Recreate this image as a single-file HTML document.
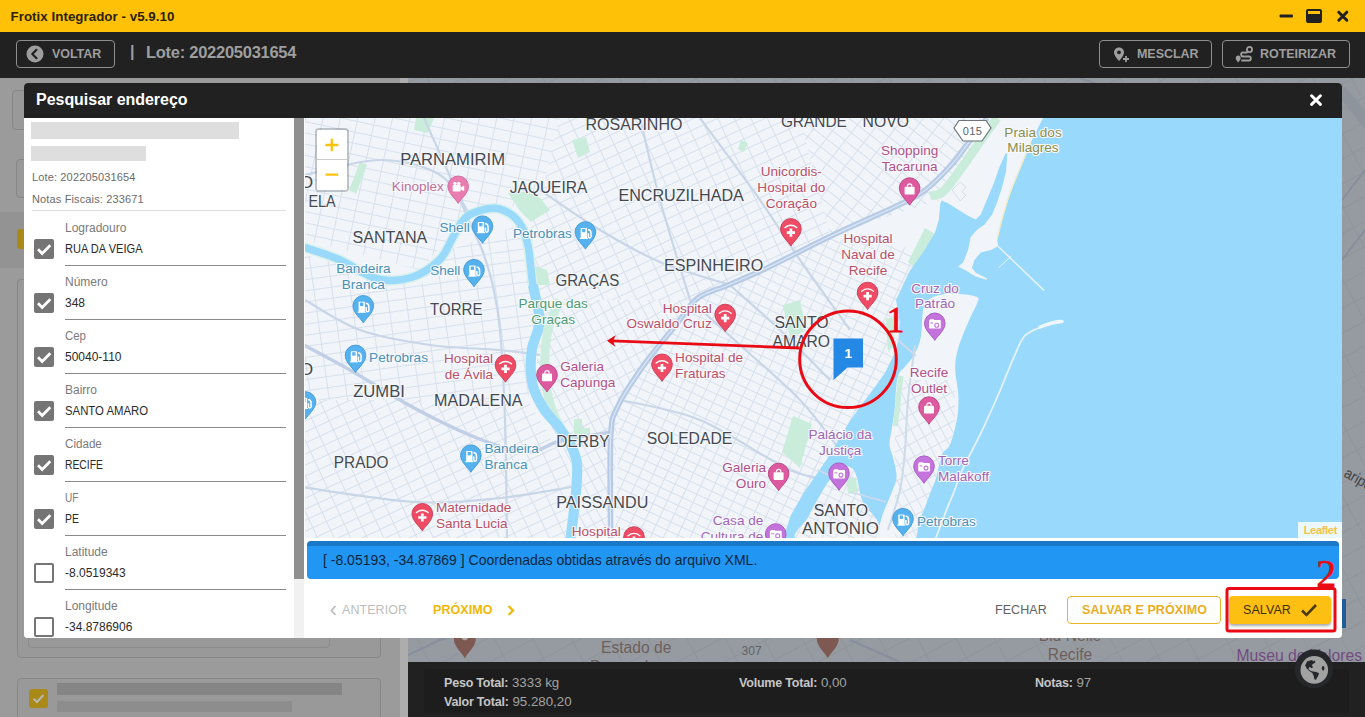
<!DOCTYPE html>
<html lang="pt-br">
<head>
<meta charset="utf-8">
<title>Frotix Integrador</title>
<style>
*{box-sizing:border-box;margin:0;padding:0}
html,body{width:1365px;height:717px;overflow:hidden;background:#9b9b9b;font-family:"Liberation Sans",sans-serif;}
.abs{position:absolute}
#titlebar{left:0;top:0;width:1365px;height:32px;background:#ffc107}
#titlebar .t{left:10.5px;top:8.5px;font-size:13.3px;font-weight:bold;color:#2b2104;letter-spacing:.05px;white-space:nowrap}
#toolbar{left:0;top:32px;width:1365px;height:46px;background:#212121}
.tbtn{border:1px solid #8e8e8e;border-radius:4px;height:28px;top:40px;color:#9e9e9e;font-weight:bold;font-size:12.5px;letter-spacing:-.05px;white-space:nowrap}
.tbtn span{position:absolute;top:6px}
/* background app (dimmed) */
#bgleft{left:0;top:78px;width:400px;height:639px;background:#9b9b9b}
#bgscroll{left:400px;top:78px;width:8px;height:639px;background:#adadad}
#bgmap{left:408px;top:78px;width:957px;height:585px;background:#969ba1}
#bottombar{left:408px;top:662px;width:957px;height:55px;background:#212121}
#bottomcard{left:424px;top:669px;width:925px;height:44px;background:#1d1d1d;border-radius:4px}
.bt{font-size:13.3px;color:#a3a3a3;white-space:nowrap;letter-spacing:0}
.bt b{color:#c6c6c6;font-size:12.5px;letter-spacing:-.2px}
.bgcard{border:1px solid #868686;border-radius:4px;background:#999999}
/* modal */
#modal{left:24px;top:83px;width:1318px;height:555px;background:#fff;border-radius:4px;overflow:hidden}
#mhead{left:0;top:0;width:1318px;height:35px;background:#212121}
#mhead .t{left:12px;top:8px;font-size:16px;font-weight:bold;color:#fff;letter-spacing:-0.03px;white-space:nowrap}
#form{left:0;top:35px;width:270px;height:520px;background:#fff}
#sbtrack{left:270px;top:35px;width:10px;height:520px;background:#f1f1f1}
#sbthumb{left:270px;top:35px;width:10px;height:461px;background:#8f8f8f}
.blur{background:#dedede}
.meta{font-size:11px;color:#6b6b6b;white-space:nowrap;left:8px;letter-spacing:.14px}
.row .lbl,.row .val{transform-origin:0 0}
.row .lbl{left:41px;font-size:12px;color:#7a7a7a;white-space:nowrap}
.row .val{left:41px;font-size:12px;color:#2a2a2a;white-space:nowrap}
.row .ul{left:41px;width:221px;height:1px;background:#8a8a8a}
.cb{left:10px;width:20px;height:20px;border-radius:2px}
.cb.on{background:#757575}
.cb.off{border:2px solid #757575;background:#fff}
#map{left:281px;top:35px;width:1037px;height:420px;background:#eff4fa;overflow:hidden}
#bluebar{left:283px;top:458px;width:1032px;height:38px;background:#2196f3;border-top:5px solid #1a78c9;border-radius:4px}
#bluebar span{position:absolute;left:16px;top:5.5px;font-size:14px;color:#10263d;white-space:nowrap}
.fbtn{font-size:12.5px;font-weight:bold;letter-spacing:.07px;white-space:nowrap}
</style>
</head>
<body>
<!-- title bar -->
<div id="titlebar" class="abs">
  <div class="t abs">Frotix Integrador - v5.9.10</div>
  <svg class="abs" style="left:1275px;top:6px" width="80" height="20" viewBox="0 0 80 20">
    <rect x="4.5" y="8.5" width="13.5" height="3" rx="1" fill="#212121"/>
    <rect x="31" y="3" width="16" height="14" rx="2" fill="#212121"/>
    <rect x="33" y="5" width="12" height="3" fill="#ffc107"/>
    <path d="M63.8 6.2 L71.8 14.2 M71.8 6.2 L63.8 14.2" stroke="#212121" stroke-width="3" stroke-linecap="round"/>
  </svg>
</div>
<!-- toolbar -->
<div id="toolbar" class="abs"></div>
<div class="tbtn abs" style="left:16px;width:99px">
  <svg class="abs" style="left:9px;top:4px" width="18" height="18" viewBox="0 0 18 18"><circle cx="9" cy="9" r="8.5" fill="#9e9e9e"/><path d="M10.5 4.8 L6.3 9 L10.5 13.2" stroke="#212121" stroke-width="2.2" fill="none" stroke-linecap="round" stroke-linejoin="round"/></svg>
  <span style="left:35px">VOLTAR</span>
</div>
<div class="abs" style="left:130px;top:43px;color:#9e9e9e;font-size:16px;font-weight:bold">|</div>
<div class="abs" style="left:146px;top:43px;color:#9e9e9e;font-size:16.5px;font-weight:bold;white-space:nowrap;letter-spacing:-0.27px">Lote: 202205031654</div>
<div class="tbtn abs" style="left:1099px;width:113px">
  <svg class="abs" style="left:13px;top:6px" width="17" height="16" viewBox="0 0 17 16"><path d="M6 0.5 C3 0.5 1 2.7 1 5.4 C1 8.6 6 14 6 14 C6 14 11 8.6 11 5.4 C11 2.7 9 0.5 6 0.5 Z" fill="#9e9e9e"/><circle cx="6" cy="5.3" r="1.9" fill="#212121"/><path d="M13 9 V15 M10 12 H16" stroke="#9e9e9e" stroke-width="1.8"/></svg>
  <span style="left:37px">MESCLAR</span>
</div>
<div class="tbtn abs" style="left:1222px;width:128px">
  <svg class="abs" style="left:12px;top:5px" width="19" height="17" viewBox="0 0 19 17"><circle cx="14.5" cy="3.5" r="2.6" fill="none" stroke="#9e9e9e" stroke-width="1.8"/><path d="M12 6.5 H8 C5.5 6.5 5.5 10.5 8 10.5 H14 C16.5 10.5 16.5 14.5 14 14.5 H7" fill="none" stroke="#9e9e9e" stroke-width="1.8" stroke-linecap="round"/><path d="M3.2 9.5 C1.7 9.5 0.7 10.6 0.7 11.9 C0.7 13.6 3.2 16.3 3.2 16.3 C3.2 16.3 5.7 13.6 5.7 11.9 C5.7 10.6 4.7 9.5 3.2 9.5 Z" fill="#9e9e9e"/></svg>
  <span style="left:37px">ROTEIRIZAR</span>
</div>

<!-- dimmed background app -->
<div id="bgleft" class="abs"></div>
<div class="abs" style="left:0;top:212px;width:400px;height:56px;background:#939393"></div>
<div id="bgscroll" class="abs"></div>
<div id="bgmap" class="abs"></div>
<svg class="abs" style="left:408px;top:78px" width="957" height="585" viewBox="408 78 957 585" font-family="'Liberation Sans',sans-serif">
  <defs><pattern id="bgp" width="34" height="22" patternUnits="userSpaceOnUse" patternTransform="rotate(-28)"><path d="M0 .5H34M.5 0V22" stroke="#8f949b" stroke-width="1" fill="none"/></pattern></defs>
  <rect x="408" y="78" width="957" height="585" fill="url(#bgp)"/>
  <path d="M408 655 L440 640 L470 632 M1080 78 L1120 92 M850 640 L900 662 M1342 200 L1365 170 M1342 260 L1365 230" stroke="#878f9c" stroke-width="2" fill="none"/>
  <path d="M1342 84 L1365 110 L1365 130 L1342 100Z" fill="#8e949c"/>
  <text transform="translate(601,653) scale(.905,1)" font-size="17.3" fill="#6f5f5c">Estado de</text>
  <text transform="translate(590,672) scale(.905,1)" font-size="17.3" fill="#6f5f5c">Pernambuco</text>
  <text x="741.6" y="655" font-size="12" fill="#5f6369">307</text>
  <text transform="translate(1070,641) scale(.905,1)" font-size="17.3" fill="#6f5f5c" text-anchor="middle">Blu Nelle</text>
  <text transform="translate(1070,660) scale(.905,1)" font-size="17.3" fill="#6f5f5c" text-anchor="middle">Recife</text>
  <text transform="translate(1236.5,660.5) scale(.905,1)" font-size="17.4" fill="#734b80">Museu de Valores</text>
  <text transform="translate(1343,476) rotate(30) scale(.905,1)" font-size="15" fill="#3f4348">aripe</text>
  <path d="M0 18 C-2.8 12.5 -10.1 7.5 -10.1 0 A10.1 10.1 0 1 1 10.1 0 C10.1 7.5 2.8 12.5 0 18Z" transform="translate(464.8,638.6) scale(1.09)" fill="#7d5952"/>
  <circle cx="464.8" cy="637" r="3.2" fill="#a9a4a2"/>
  <path d="M0 18 C-2.8 12.5 -10.1 7.5 -10.1 0 A10.1 10.1 0 1 1 10.1 0 C10.1 7.5 2.8 12.5 0 18Z" transform="translate(827.8,638.6) scale(1.09)" fill="#7d5952"/>
  <rect x="1342" y="599" width="4" height="29" fill="#1f5d97"/>
</svg>
<div class="bgcard abs" style="left:12px;top:90px;width:380px;height:40px"></div>
<div class="bgcard abs" style="left:16px;top:159px;width:370px;height:39px"></div>
<div class="abs" style="left:17px;top:229px;width:20px;height:20px;background:#a98a18;border-radius:3px"></div>
<div class="bgcard abs" style="left:17px;top:279px;width:364px;height:379px"></div>
<div class="bgcard abs" style="left:28px;top:300px;width:302px;height:348px;border-color:#8b8b8b"></div>
<div class="bgcard abs" style="left:17px;top:678px;width:364px;height:60px"></div>
<svg class="abs" style="left:29px;top:689px" width="19" height="19" viewBox="0 0 19 19"><rect width="19" height="19" rx="3" fill="#a98a18"/><path d="M4.5 9.8 L8 13 L14.5 6" stroke="#b8b8b8" stroke-width="2" fill="none"/></svg>
<div class="abs" style="left:57px;top:683px;width:285px;height:12px;background:#858585"></div>
<div class="abs" style="left:57px;top:701px;width:235px;height:11px;background:#8d8d8d"></div>

<div id="bottombar" class="abs"></div>
<div id="bottomcard" class="abs"></div>
<div class="bt abs" style="left:444px;top:675px"><b>Peso Total:</b> 3333 kg</div>
<div class="bt abs" style="left:444px;top:694px"><b>Valor Total:</b> 95.280,20</div>
<div class="bt abs" style="left:739px;top:675px"><b>Volume Total:</b> 0,00</div>
<div class="bt abs" style="left:1035px;top:675px"><b>Notas:</b> 97</div>
<!-- globe fab -->
<svg class="abs" style="left:1290px;top:645px" width="48" height="48" viewBox="-24 -24 48 48">
  <circle cx="-.1" cy="-.1" r="19.3" fill="#25272a"/>
  <g transform="translate(.3,.9)"><circle r="13.8" fill="#a2a2a2"/>
  <path d="M-9.2 -4.6 L-7 -8.6 L-2.2 -9.8 L-1.2 -8.4 L.6 -9.6 L1 -7.4 L-1 -6.2 L-2.6 -4.6 L-1.2 -2.6 L-2.8 -1.6 L-4.6 -3.2 L-6 -1 L-3.4 1 L-1.2 1.6 L2 2 L4.8 3.4 L3.8 6.2 L1.6 9.9 L.2 9.6 L-.8 5.6 L-2 3.2 L-5 1.2 L-7.6 -1.4 Z" fill="#25272a"/>
  <ellipse cx="8.8" cy="-1.6" rx="1.3" ry="2.4" fill="#25272a"/></g>
</svg>

<!-- modal -->
<div id="modal" class="abs">
  <div id="mhead" class="abs">
    <div class="t abs">Pesquisar endereço</div>
    <svg class="abs" style="left:1285px;top:10px" width="14" height="14" viewBox="0 0 14 14"><path d="M2.6 2.8 L11.4 11.4 M11.4 2.8 L2.6 11.4" stroke="#fff" stroke-width="3" stroke-linecap="round"/></svg>
  </div>
  <div id="form" class="abs">
    <div class="blur abs" style="left:7px;top:4px;width:208px;height:17px"></div>
    <div class="blur abs" style="left:7px;top:28px;width:115px;height:15px"></div>
    <div class="meta abs" style="top:53px">Lote: 202205031654</div>
    <div class="meta abs" style="top:75px">Notas Fiscais: 233671</div>
    <div class="abs" style="left:8px;top:92px;width:254px;height:1px;background:#dcdcdc"></div>
    <!-- rows inserted below -->
    <div class="row"><div class="lbl abs" style="top:103px">Logradouro</div><div class="val abs" style="top:124px;transform:scaleX(0.923)">RUA DA VEIGA</div><div class="ul abs" style="top:147px"></div>
<svg class="abs" style="left:10px;top:121px" width="20" height="20" viewBox="0 0 20 20"><rect width="20" height="20" rx="2" fill="#757575"/><path d="M4 10.3 L8.2 14.5 L16.3 6.2" stroke="#fff" stroke-width="2.7" fill="none"/></svg></div>
<div class="row"><div class="lbl abs" style="top:157px">Número</div><div class="val abs" style="top:178px">348</div><div class="ul abs" style="top:201px"></div>
<svg class="abs" style="left:10px;top:175px" width="20" height="20" viewBox="0 0 20 20"><rect width="20" height="20" rx="2" fill="#757575"/><path d="M4 10.3 L8.2 14.5 L16.3 6.2" stroke="#fff" stroke-width="2.7" fill="none"/></svg></div>
<div class="row"><div class="lbl abs" style="top:211px;transform:scaleX(0.95)">Cep</div><div class="val abs" style="top:232px">50040-110</div><div class="ul abs" style="top:255px"></div>
<svg class="abs" style="left:10px;top:229px" width="20" height="20" viewBox="0 0 20 20"><rect width="20" height="20" rx="2" fill="#757575"/><path d="M4 10.3 L8.2 14.5 L16.3 6.2" stroke="#fff" stroke-width="2.7" fill="none"/></svg></div>
<div class="row"><div class="lbl abs" style="top:265px">Bairro</div><div class="val abs" style="top:286px;transform:scaleX(0.945)">SANTO AMARO</div><div class="ul abs" style="top:309px"></div>
<svg class="abs" style="left:10px;top:283px" width="20" height="20" viewBox="0 0 20 20"><rect width="20" height="20" rx="2" fill="#757575"/><path d="M4 10.3 L8.2 14.5 L16.3 6.2" stroke="#fff" stroke-width="2.7" fill="none"/></svg></div>
<div class="row"><div class="lbl abs" style="top:319px;transform:scaleX(0.968)">Cidade</div><div class="val abs" style="top:340px;transform:scaleX(0.861)">RECIFE</div><div class="ul abs" style="top:363px"></div>
<svg class="abs" style="left:10px;top:337px" width="20" height="20" viewBox="0 0 20 20"><rect width="20" height="20" rx="2" fill="#757575"/><path d="M4 10.3 L8.2 14.5 L16.3 6.2" stroke="#fff" stroke-width="2.7" fill="none"/></svg></div>
<div class="row"><div class="lbl abs" style="top:373px;transform:scaleX(0.84)">UF</div><div class="val abs" style="top:394px;transform:scaleX(0.863)">PE</div><div class="ul abs" style="top:417px"></div>
<svg class="abs" style="left:10px;top:391px" width="20" height="20" viewBox="0 0 20 20"><rect width="20" height="20" rx="2" fill="#757575"/><path d="M4 10.3 L8.2 14.5 L16.3 6.2" stroke="#fff" stroke-width="2.7" fill="none"/></svg></div>
<div class="row"><div class="lbl abs" style="top:427px">Latitude</div><div class="val abs" style="top:448px">-8.0519343</div><div class="ul abs" style="top:471px"></div>
<div class="cb off abs" style="top:445px"></div></div>
<div class="row"><div class="lbl abs" style="top:481px">Longitude</div><div class="val abs" style="top:502px">-34.8786906</div><div class="ul abs" style="top:525px"></div>
<div class="cb off abs" style="top:499px"></div></div>
  </div>
  <div id="sbtrack" class="abs"></div>
  <div id="sbthumb" class="abs"></div>
  <div id="map" class="abs"><svg width="1037" height="420" viewBox="305 118 1037 420" style="position:absolute;left:0;top:0;font-family:'Liberation Sans',sans-serif">
<defs>
<pattern id="g0" width="17" height="11" patternUnits="userSpaceOnUse" patternTransform="rotate(12)"><path d="M0 0.5H17M0.5 0V11" stroke="#d7e0ec" stroke-width="1" fill="none"/></pattern>
<pattern id="g1" width="15" height="10" patternUnits="userSpaceOnUse" patternTransform="rotate(-25)"><path d="M0 0.5H15M0.5 0V10" stroke="#d7e0ec" stroke-width="1" fill="none"/></pattern>
<pattern id="g2" width="16" height="10" patternUnits="userSpaceOnUse" patternTransform="rotate(38)"><path d="M0 0.5H16M0.5 0V10" stroke="#d7e0ec" stroke-width="1" fill="none"/></pattern>
<pattern id="g3" width="13" height="9" patternUnits="userSpaceOnUse" patternTransform="rotate(62)"><path d="M0 0.5H13M0.5 0V9" stroke="#d7e0ec" stroke-width="1" fill="none"/></pattern>
<pattern id="g4" width="18" height="11" patternUnits="userSpaceOnUse" patternTransform="rotate(-8)"><path d="M0 0.5H18M0.5 0V11" stroke="#d7e0ec" stroke-width="1" fill="none"/></pattern>
<pattern id="g5" width="12" height="9" patternUnits="userSpaceOnUse" patternTransform="rotate(25)"><path d="M0 0.5H12M0.5 0V9" stroke="#d7e0ec" stroke-width="1" fill="none"/></pattern>
</defs>
<rect x="305" y="118" width="1037" height="420" fill="#f1f5fa"/>
<polygon points="305.0,118.0 560.0,118.0 540.0,200.0 470.0,215.0 420.0,270.0 305.0,240.0" fill="url(#g0)"/>
<polygon points="560.0,118.0 800.0,118.0 830.0,235.0 690.0,300.0 540.0,300.0 530.0,215.0 540.0,200.0" fill="url(#g1)"/>
<polygon points="800.0,118.0 990.0,118.0 940.0,200.0 830.0,235.0" fill="url(#g2)"/>
<polygon points="305.0,255.0 420.0,285.0 450.0,250.0 520.0,225.0 535.0,330.0 528.0,400.0 305.0,400.0" fill="url(#g4)"/>
<polygon points="540.0,300.0 690.0,300.0 620.0,400.0 610.0,538.0 580.0,538.0 575.0,470.0 535.0,400.0" fill="url(#g3)"/>
<polygon points="690.0,300.0 830.0,238.0 925.0,250.0 895.0,360.0 840.0,450.0 785.0,538.0 615.0,538.0 620.0,400.0" fill="url(#g5)"/>
<polygon points="305.0,400.0 528.0,400.0 570.0,470.0 572.0,538.0 305.0,538.0" fill="url(#g1)"/>
<polygon points="572.0,140.0 586.0,137.0 590.0,152.0 578.0,158.0" fill="#c9ecdb"/>
<polygon points="416.0,118.0 434.0,118.0 428.0,133.0 414.0,130.0" fill="#c9ecdb"/>
<polygon points="508.0,193.0 534.0,191.0 550.0,210.0 531.0,222.0 520.0,211.0" fill="#c9ecdb"/>
<polygon points="535.0,266.0 547.0,270.0 550.0,285.0 538.0,285.0" fill="#c9ecdb"/>
<polygon points="360.0,162.0 367.0,165.0 356.0,194.0 349.0,190.0" fill="#c9ecdb"/>
<polygon points="574.0,419.0 582.0,419.0 582.0,428.0 590.0,428.0 590.0,437.0 574.0,437.0" fill="#c9ecdb"/>
<polygon points="793.0,416.0 812.0,424.0 800.0,468.0 782.0,452.0" fill="#c9ecdb"/>
<polygon points="783.0,305.0 800.0,300.0 806.0,330.0 790.0,338.0" fill="#c9ecdb"/>
<polygon points="886.0,318.0 893.0,318.0 894.0,345.0 888.0,352.0" fill="#c9ecdb"/>
<polygon points="925.0,228.0 935.0,234.0 915.0,268.0 908.0,262.0" fill="#c9ecdb"/>
<polygon points="741.0,140.0 748.0,143.0 744.0,152.0 738.0,149.0" fill="#c9ecdb"/>
<path d="M560.0 300.0 C558.0 305.0 550.5 318.0 548.0 330.0 C545.5 342.0 544.3 358.7 545.0 372.0 C545.7 385.3 547.8 397.8 552.0 410.0 C556.2 422.2 567.0 439.2 570.0 445.0" stroke="#c9ecdb" stroke-width="9" fill="none" opacity=".9"/>
<path d="M997.0 118.0 C994.0 122.2 984.7 134.9 978.7 143.4 C972.7 151.9 966.8 160.8 960.9 168.8 C955.0 176.8 948.4 187.1 943.2 191.6 C938.1 196.1 932.2 195.3 930.0 196.0" stroke="#c9ecdb" stroke-width="9" fill="none"/>
<path d="M305.0 300.0 C314.2 305.0 339.2 322.5 360.0 330.0 C380.8 337.5 406.7 341.7 430.0 345.0 C453.3 348.3 481.7 348.3 500.0 350.0 C518.3 351.7 533.3 354.2 540.0 355.0" stroke="#c9d6e8" stroke-width="2.2" fill="none"/>
<path d="M300.0 487.0 C319.3 489.5 382.7 500.2 416.0 502.0 C449.3 503.8 474.0 500.5 500.0 498.0 C526.0 495.5 560.0 488.8 572.0 487.0" stroke="#c9d6e8" stroke-width="2.2" fill="none"/>
<path d="M424.0 118.0 C427.5 125.8 438.8 151.0 445.0 165.0 C451.2 179.0 456.6 191.8 461.0 202.0 C465.4 212.2 467.8 218.2 471.4 226.4 C475.0 234.7 479.1 241.7 482.7 251.5 C486.2 261.3 489.8 271.9 492.7 285.0 C495.6 298.1 497.9 307.5 500.0 330.0 C502.1 352.5 503.8 385.3 505.0 420.0 C506.2 454.7 506.7 518.3 507.0 538.0" stroke="#c9d6e8" stroke-width="2.2" fill="none"/>
<path d="M640.0 118.0 C643.3 131.7 651.7 169.7 660.0 200.0 C668.3 230.3 685.0 283.3 690.0 300.0" stroke="#c9d6e8" stroke-width="2.2" fill="none"/>
<path d="M700.0 118.0 C710.0 131.7 743.3 176.3 760.0 200.0 C776.7 223.7 785.0 238.3 800.0 260.0 C815.0 281.7 841.7 318.3 850.0 330.0" stroke="#c9d6e8" stroke-width="2.2" fill="none"/>
<path d="M620.0 400.0 C633.3 403.3 671.7 408.3 700.0 420.0 C728.3 431.7 767.5 460.0 790.0 470.0 C812.5 480.0 827.5 478.3 835.0 480.0" stroke="#c9d6e8" stroke-width="2.2" fill="none"/>
<path d="M690.0 300.0 C698.3 307.5 721.7 328.3 740.0 345.0 C758.3 361.7 783.3 382.5 800.0 400.0 C816.7 417.5 833.3 441.7 840.0 450.0" stroke="#c9d6e8" stroke-width="2.2" fill="none"/>
<path d="M540.0 190.0 C550.0 196.7 580.0 218.0 600.0 230.0 C620.0 242.0 638.3 252.8 660.0 262.0 C681.7 271.2 718.3 281.2 730.0 285.0" stroke="#c9d6e8" stroke-width="2.2" fill="none"/>
<path d="M305.0 175.0 C317.5 172.5 357.5 160.0 380.0 160.0 C402.5 160.0 425.0 165.8 440.0 175.0 C455.0 184.2 465.0 208.3 470.0 215.0" stroke="#c9d6e8" stroke-width="2.2" fill="none"/>
<path d="M730.0 285.0 C738.3 292.5 763.3 314.2 780.0 330.0 C796.7 345.8 821.7 371.7 830.0 380.0" stroke="#c9d6e8" stroke-width="2.2" fill="none"/>
<path d="M300.0 343.0 C308.3 347.5 330.7 359.0 350.0 370.0 C369.3 381.0 394.0 397.3 416.0 409.0 C438.0 420.7 463.2 432.8 482.0 440.0 C500.8 447.2 516.0 451.8 529.0 452.0 C542.0 452.2 546.2 444.3 560.0 441.0 C573.8 437.7 603.3 433.5 612.0 432.0" stroke="#c1cfe6" stroke-width="3.4" fill="none"/>
<path d="M610.7 538.0 C610.7 521.1 609.4 458.6 610.7 436.5 C612.0 414.4 612.6 417.7 618.4 405.4 C624.2 393.1 636.0 376.1 645.6 362.7 C655.2 349.3 667.4 335.7 676.0 325.0 C684.6 314.3 689.0 304.9 697.5 298.3 C706.0 291.7 715.7 290.4 727.0 285.5 C738.3 280.6 748.2 276.9 765.5 268.7 C782.8 260.5 807.9 247.0 830.6 236.2 C853.3 225.4 885.8 211.3 901.5 203.7 C917.2 196.1 916.9 196.7 925.0 190.4 C933.1 184.2 943.1 174.0 950.3 166.2 C957.5 158.4 961.9 151.4 968.0 143.4 C974.1 135.4 983.8 122.2 987.0 118.0" stroke="#b7cbe6" stroke-width="5.6" fill="none" stroke-linejoin="round"/>
<path d="M610.7 538.0 C610.7 521.1 609.4 458.6 610.7 436.5 C612.0 414.4 612.6 417.7 618.4 405.4 C624.2 393.1 636.0 376.1 645.6 362.7 C655.2 349.3 667.4 335.7 676.0 325.0 C684.6 314.3 689.0 304.9 697.5 298.3 C706.0 291.7 715.7 290.4 727.0 285.5 C738.3 280.6 748.2 276.9 765.5 268.7 C782.8 260.5 807.9 247.0 830.6 236.2 C853.3 225.4 885.8 211.3 901.5 203.7 C917.2 196.1 916.9 196.7 925.0 190.4 C933.1 184.2 943.1 174.0 950.3 166.2 C957.5 158.4 961.9 151.4 968.0 143.4 C974.1 135.4 983.8 122.2 987.0 118.0" stroke="#dbe6f4" stroke-width="1.2" fill="none"/>
<path d="M300.0 246.0 C306.5 248.2 326.1 254.0 339.0 259.5 C351.9 265.0 365.4 276.1 377.7 279.0 C390.0 281.9 402.2 280.2 412.6 277.0 C423.0 273.8 433.2 266.0 439.8 259.5 C446.4 253.0 448.8 244.2 452.5 238.0 C456.2 231.8 458.9 226.0 462.0 222.0 C465.1 218.0 466.1 216.1 471.4 213.8 C476.7 211.5 487.5 208.2 494.0 208.2 C500.5 208.2 505.7 210.8 510.3 213.8 C514.9 216.8 518.7 221.2 521.6 226.4 C524.5 231.6 526.4 238.9 527.9 245.2 C529.4 251.5 529.6 257.4 530.4 264.0 C531.2 270.6 531.8 278.3 532.9 285.0 C534.0 291.7 535.9 298.5 537.0 304.0 C538.1 309.5 539.3 313.7 539.5 318.0 C539.7 322.3 539.2 325.1 538.0 330.0 C536.8 334.9 533.4 341.3 532.2 347.6 C531.0 353.9 530.5 361.2 530.7 368.0 C531.0 374.8 531.5 381.7 533.7 388.5 C535.9 395.3 539.8 402.6 543.9 409.0 C548.0 415.4 554.1 420.8 558.5 426.6 C562.9 432.5 567.2 438.2 570.2 444.1 C573.2 450.0 575.6 455.4 576.7 461.7 C577.8 468.0 577.1 474.9 576.7 482.2 C576.4 489.5 575.7 495.8 574.6 505.6 C573.5 515.4 570.9 535.1 570.2 541.0" stroke="#c8eee0" stroke-width="10.5" fill="none" opacity=".55"/>
<path d="M300.0 246.0 C306.5 248.2 326.1 254.0 339.0 259.5 C351.9 265.0 365.4 276.1 377.7 279.0 C390.0 281.9 402.2 280.2 412.6 277.0 C423.0 273.8 433.2 266.0 439.8 259.5 C446.4 253.0 448.8 244.2 452.5 238.0 C456.2 231.8 458.9 226.0 462.0 222.0 C465.1 218.0 466.1 216.1 471.4 213.8 C476.7 211.5 487.5 208.2 494.0 208.2 C500.5 208.2 505.7 210.8 510.3 213.8 C514.9 216.8 518.7 221.2 521.6 226.4 C524.5 231.6 526.4 238.9 527.9 245.2 C529.4 251.5 529.6 257.4 530.4 264.0 C531.2 270.6 531.8 278.3 532.9 285.0 C534.0 291.7 535.9 298.5 537.0 304.0 C538.1 309.5 539.3 313.7 539.5 318.0 C539.7 322.3 539.2 325.1 538.0 330.0 C536.8 334.9 533.4 341.3 532.2 347.6 C531.0 353.9 530.5 361.2 530.7 368.0 C531.0 374.8 531.5 381.7 533.7 388.5 C535.9 395.3 539.8 402.6 543.9 409.0 C548.0 415.4 554.1 420.8 558.5 426.6 C562.9 432.5 567.2 438.2 570.2 444.1 C573.2 450.0 575.6 455.4 576.7 461.7 C577.8 468.0 577.1 474.9 576.7 482.2 C576.4 489.5 575.7 495.8 574.6 505.6 C573.5 515.4 570.9 535.1 570.2 541.0" stroke="#99d9fb" stroke-width="7.5" fill="none" stroke-linecap="butt"/>
<path d="M532.9 285.0 C533.6 288.2 535.9 298.5 537.0 304.0 C538.1 309.5 539.3 313.7 539.5 318.0 C539.7 322.3 539.2 325.1 538.0 330.0 C536.8 334.9 533.4 341.3 532.2 347.6 C531.0 353.9 530.5 361.2 530.7 368.0 C531.0 374.8 531.5 381.7 533.7 388.5 C535.9 395.3 539.8 402.6 543.9 409.0 C548.0 415.4 554.1 420.8 558.5 426.6 C562.9 432.5 567.2 438.2 570.2 444.1 C573.2 450.0 575.6 455.4 576.7 461.7 C577.8 468.0 577.1 474.9 576.7 482.2 C576.4 489.5 575.7 495.8 574.6 505.6 C573.5 515.4 570.9 535.1 570.2 541.0" stroke="#99d9fb" stroke-width="10" fill="none" stroke-linecap="butt"/>
<path d="M300.0 330.0 C303.0 332.5 313.0 338.0 318.0 345.0 C323.0 352.0 329.3 362.8 330.0 372.0 C330.7 381.2 326.2 392.0 322.0 400.0 C317.8 408.0 307.8 416.7 305.0 420.0" stroke="#99d9fb" stroke-width="5" fill="none" opacity=".0"/>
<path d="M1005.6 153.5 L999.8 166.2 L993.5 184.0 L987.1 199.2 L980.8 214.4 L975.7 219.5 L968.1 215.7 L957.9 209.4 L947.8 203.0 L941.4 200.5 L940.2 204.3 L938.9 219.5 L935.1 232.2 L924.0 251.0 L909.2 271.8 L901.0 289.6 L896.0 300.0 L899.7 321.0 L898.7 337.7 L895.5 352.0 L891.5 360.0 L885.2 372.6 L876.4 385.1 L867.7 396.4 L857.6 410.2 L848.8 422.8 L841.3 435.3 L829.0 456.0 L818.0 472.2 L804.4 491.7 L790.8 515.2 L783.0 540.0 L1345 540 L1345 118 L1043.0 118.0 L1031.5 140.8 L1020.1 168.8 L1010.0 194.1 L1002.3 219.5 L997.3 239.8 L998.0 246.2 L990.9 250.0 L980.8 252.5 L974.4 260.1 L971.9 267.7 L975.7 272.8 L987.1 278.4 L986.6 279.8 L975.7 276.6 L965.5 270.3 L957.9 266.5 L963.0 262.7 L968.1 250.0 L970.6 237.3 L977.0 229.7 L984.6 224.6 L992.2 214.4 L997.3 201.8 L1002.3 186.5 L1006.1 171.3 L1007.4 153.5Z" fill="#99d9fb"/>
<path d="M998 246.2 L1044.2 290.6" stroke="#e9f3fa" stroke-width="1.5" fill="none"/>
<path d="M1011.2 256.3 L998.5 267.7" stroke="#e9f3fa" stroke-width="1" fill="none"/>
<path d="M1031.0 141.5 C1029.1 146.1 1023.2 160.2 1019.6 169.0 C1016.0 177.8 1012.5 185.9 1009.5 194.3 C1006.5 202.8 1003.9 212.1 1001.8 219.7 C999.7 227.3 997.7 236.5 996.9 239.8" stroke="#eeedc8" stroke-width="1.4" fill="none"/>
<path d="M952 190 l8 -8 l6 5 l-4 5 l4 3 l-6 6 z" fill="none" stroke="#d5deea" stroke-width="1"/>
<path d="M833.7 474.2 C836.5 470.2 837.0 469.4 839.0 468.0 C841.0 466.6 843.1 465.8 845.4 466.0 C847.7 466.2 851.1 467.0 853.0 469.0 C854.9 471.0 856.0 474.9 857.0 478.0 C858.0 481.1 858.2 484.1 859.0 487.8 C859.8 491.5 860.7 496.6 862.0 500.0 C863.3 503.4 865.0 505.3 867.0 508.0 C869.0 510.7 872.1 513.3 874.0 516.0 C875.9 518.7 877.7 520.0 878.5 524.0 C879.3 528.0 892.3 537.3 879.0 540.0 C865.7 542.7 810.4 543.8 798.6 540.0 C786.8 536.2 804.4 525.0 808.3 517.0 C812.2 508.9 817.8 498.8 822.0 491.7 C826.2 484.6 830.9 478.1 833.7 474.2Z" fill="#f1f5fa"/>
<path d="M833.7 474.2 C836.5 470.2 837.0 469.4 839.0 468.0 C841.0 466.6 843.1 465.8 845.4 466.0 C847.7 466.2 851.1 467.0 853.0 469.0 C854.9 471.0 856.0 474.9 857.0 478.0 C858.0 481.1 858.2 484.1 859.0 487.8 C859.8 491.5 860.7 496.6 862.0 500.0 C863.3 503.4 865.0 505.3 867.0 508.0 C869.0 510.7 872.1 513.3 874.0 516.0 C875.9 518.7 877.7 520.0 878.5 524.0 C879.3 528.0 892.3 537.3 879.0 540.0 C865.7 542.7 810.4 543.8 798.6 540.0 C786.8 536.2 804.4 525.0 808.3 517.0 C812.2 508.9 817.8 498.8 822.0 491.7 C826.2 484.6 830.9 478.1 833.7 474.2Z" fill="url(#g5)"/>
<polygon points="846,478 856,478 858,492 848,494" fill="#c9ecdb"/>
<path d="M927.0 301.0 C929.9 298.1 934.5 296.2 940.0 295.0 C945.5 293.8 953.8 293.7 960.0 294.0 C966.2 294.3 974.1 295.5 977.0 297.0 C979.9 298.5 978.6 299.0 977.2 303.0 C975.8 307.0 971.9 313.5 968.8 321.0 C965.6 328.5 960.6 340.0 958.3 348.0 C956.0 356.0 955.2 361.3 955.2 369.0 C955.2 376.7 957.9 386.0 958.3 394.0 C958.6 402.0 958.6 408.7 957.3 417.0 C956.0 425.3 952.9 437.6 950.4 443.9 C947.9 450.2 944.4 448.9 942.0 454.6 C939.6 460.3 938.1 471.6 936.1 478.0 C934.1 484.4 932.2 487.6 930.3 492.7 C928.3 497.8 926.3 503.9 924.4 508.8 C922.5 513.7 920.5 516.8 918.6 522.0 C916.7 527.2 919.6 537.0 913.0 540.0 C906.4 543.0 884.4 543.0 879.0 540.0 C873.6 537.0 879.5 527.2 880.5 522.0 C881.5 516.8 882.9 513.9 884.9 508.8 C886.9 503.7 890.2 496.6 892.2 491.2 C894.2 485.8 896.5 482.2 896.6 476.6 C896.7 471.0 894.2 462.9 893.0 457.6 C891.8 452.3 889.8 449.6 889.5 445.0 C889.2 440.4 890.6 436.1 891.5 430.3 C892.4 424.5 893.9 416.7 894.6 410.2 C895.3 403.7 895.3 397.3 895.9 391.4 C896.5 385.5 896.8 379.2 898.4 375.0 C900.0 370.8 902.6 369.7 905.3 366.3 C908.0 362.9 911.8 359.2 914.4 354.4 C917.0 349.6 919.3 344.7 920.7 337.7 C922.1 330.7 921.8 318.7 922.8 312.6 C923.8 306.5 924.1 303.9 927.0 301.0Z" fill="#f1f5fa"/>
<clipPath id="cp"><path d="M927.0 301.0 C929.9 298.1 934.5 296.2 940.0 295.0 C945.5 293.8 953.8 293.7 960.0 294.0 C966.2 294.3 974.1 295.5 977.0 297.0 C979.9 298.5 978.6 299.0 977.2 303.0 C975.8 307.0 971.9 313.5 968.8 321.0 C965.6 328.5 960.6 340.0 958.3 348.0 C956.0 356.0 955.2 361.3 955.2 369.0 C955.2 376.7 957.9 386.0 958.3 394.0 C958.6 402.0 958.6 408.7 957.3 417.0 C956.0 425.3 952.9 437.6 950.4 443.9 C947.9 450.2 944.4 448.9 942.0 454.6 C939.6 460.3 938.1 471.6 936.1 478.0 C934.1 484.4 932.2 487.6 930.3 492.7 C928.3 497.8 926.3 503.9 924.4 508.8 C922.5 513.7 920.5 516.8 918.6 522.0 C916.7 527.2 919.6 537.0 913.0 540.0 C906.4 543.0 884.4 543.0 879.0 540.0 C873.6 537.0 879.5 527.2 880.5 522.0 C881.5 516.8 882.9 513.9 884.9 508.8 C886.9 503.7 890.2 496.6 892.2 491.2 C894.2 485.8 896.5 482.2 896.6 476.6 C896.7 471.0 894.2 462.9 893.0 457.6 C891.8 452.3 889.8 449.6 889.5 445.0 C889.2 440.4 890.6 436.1 891.5 430.3 C892.4 424.5 893.9 416.7 894.6 410.2 C895.3 403.7 895.3 397.3 895.9 391.4 C896.5 385.5 896.8 379.2 898.4 375.0 C900.0 370.8 902.6 369.7 905.3 366.3 C908.0 362.9 911.8 359.2 914.4 354.4 C917.0 349.6 919.3 344.7 920.7 337.7 C922.1 330.7 921.8 318.7 922.8 312.6 C923.8 306.5 924.1 303.9 927.0 301.0Z"/></clipPath>
<rect x="895" y="380" width="60" height="160" fill="url(#g3)" clip-path="url(#cp)"/>
<path d="M901.0 376.0 C900.7 378.7 899.6 386.3 899.0 392.0 C898.4 397.7 898.2 404.3 897.5 410.0 C896.8 415.7 895.4 423.3 895.0 426.0" stroke="#c9ecdb" stroke-width="5" fill="none"/>
<path d="M915.0 345.0 C913.8 354.2 909.7 382.5 908.0 400.0 C906.3 417.5 906.3 435.0 905.0 450.0 C903.7 465.0 902.8 476.7 900.0 490.0 C897.2 503.3 890.0 523.3 888.0 530.0" stroke="#cddaea" stroke-width="2" fill="none"/>
<path d="M898 340 L916 356" stroke="#cddaea" stroke-width="2"/>
<path d="M818 470 L835 478 M850 492 L886 502" stroke="#cddaea" stroke-width="1.6"/>
<path d="M1062.5 321.8 C1060.8 322.2 1056.2 322.9 1052.0 324.0 C1047.8 325.1 1042.1 326.4 1037.4 328.5 C1032.7 330.6 1027.9 332.1 1024.0 336.8 C1020.1 341.5 1018.5 346.9 1014.0 356.9 C1009.5 366.9 1002.9 384.2 997.3 397.0 C991.7 409.8 986.3 421.8 980.5 433.9 C974.7 445.9 967.0 459.5 962.5 469.3 C958.0 479.1 956.4 485.9 953.7 492.7 C951.0 499.5 948.7 504.5 946.4 510.3 C944.1 516.1 941.7 522.8 939.8 527.8 C937.9 532.8 935.8 538.0 935.0 540.0" stroke="#e4f2fb" stroke-width="1.8" fill="none"/>
<path d="M1040 327 Q1055 321 1062 321.5" stroke="#eef7fc" stroke-width="3.4" stroke-linecap="round" fill="none"/>
<text x="585.4" y="130.2" font-size="16.3" textLength="97.1" lengthAdjust="spacingAndGlyphs" fill="#45494f" stroke="#f4f7fb" stroke-width="2.2" paint-order="stroke" stroke-linejoin="round">ROSARINHO</text>
<text x="780.9" y="127.2" font-size="16.3" textLength="65.9" lengthAdjust="spacingAndGlyphs" fill="#45494f" stroke="#f4f7fb" stroke-width="2.2" paint-order="stroke" stroke-linejoin="round">GRANDE</text>
<text x="862.5" y="127.2" font-size="16.3" textLength="46.4" lengthAdjust="spacingAndGlyphs" fill="#45494f" stroke="#f4f7fb" stroke-width="2.2" paint-order="stroke" stroke-linejoin="round">NOVO</text>
<text x="400.2" y="165.1" font-size="16.3" textLength="104.8" lengthAdjust="spacingAndGlyphs" fill="#45494f" stroke="#f4f7fb" stroke-width="2.2" paint-order="stroke" stroke-linejoin="round">PARNAMIRIM</text>
<text x="509.7" y="193.1" font-size="16.3" textLength="77.7" lengthAdjust="spacingAndGlyphs" fill="#45494f" stroke="#f4f7fb" stroke-width="2.2" paint-order="stroke" stroke-linejoin="round">JAQUEIRA</text>
<text x="618.4" y="201.3" font-size="16.3" textLength="125.5" lengthAdjust="spacingAndGlyphs" fill="#45494f" stroke="#f4f7fb" stroke-width="2.2" paint-order="stroke" stroke-linejoin="round">ENCRUZILHADA</text>
<text x="308.5" y="207" font-size="16.3" textLength="27.2" lengthAdjust="spacingAndGlyphs" fill="#45494f" stroke="#f4f7fb" stroke-width="2.2" paint-order="stroke" stroke-linejoin="round">ELA</text>
<text x="299.5" y="188.2" font-size="16.3" textLength="13.7" lengthAdjust="spacingAndGlyphs" fill="#45494f" stroke="#f4f7fb" stroke-width="2.2" paint-order="stroke" stroke-linejoin="round">O</text>
<text x="352.4" y="243.2" font-size="16.3" textLength="75.0" lengthAdjust="spacingAndGlyphs" fill="#45494f" stroke="#f4f7fb" stroke-width="2.2" paint-order="stroke" stroke-linejoin="round">SANTANA</text>
<text x="663.9" y="271.2" font-size="16.3" textLength="99.4" lengthAdjust="spacingAndGlyphs" fill="#45494f" stroke="#f4f7fb" stroke-width="2.2" paint-order="stroke" stroke-linejoin="round">ESPINHEIRO</text>
<text x="555.5" y="285.9" font-size="16.3" textLength="63.7" lengthAdjust="spacingAndGlyphs" fill="#45494f" stroke="#f4f7fb" stroke-width="2.2" paint-order="stroke" stroke-linejoin="round">GRAÇAS</text>
<text x="430.1" y="315" font-size="16.3" textLength="52.4" lengthAdjust="spacingAndGlyphs" fill="#45494f" stroke="#f4f7fb" stroke-width="2.2" paint-order="stroke" stroke-linejoin="round">TORRE</text>
<text x="774.5" y="328.1" font-size="16.3" textLength="54.1" lengthAdjust="spacingAndGlyphs" fill="#45494f" stroke="#f4f7fb" stroke-width="2.2" paint-order="stroke" stroke-linejoin="round">SANTO</text>
<text x="772.5" y="346.7" font-size="16.3" textLength="57.5" lengthAdjust="spacingAndGlyphs" fill="#45494f" stroke="#f4f7fb" stroke-width="2.2" paint-order="stroke" stroke-linejoin="round">AMARO</text>
<text x="353.2" y="396.5" font-size="16.3" textLength="51.7" lengthAdjust="spacingAndGlyphs" fill="#45494f" stroke="#f4f7fb" stroke-width="2.2" paint-order="stroke" stroke-linejoin="round">ZUMBI</text>
<text x="434" y="406.2" font-size="16.3" textLength="88.5" lengthAdjust="spacingAndGlyphs" fill="#45494f" stroke="#f4f7fb" stroke-width="2.2" paint-order="stroke" stroke-linejoin="round">MADALENA</text>
<text x="556.3" y="446.6" font-size="16.3" textLength="53.2" lengthAdjust="spacingAndGlyphs" fill="#45494f" stroke="#f4f7fb" stroke-width="2.2" paint-order="stroke" stroke-linejoin="round">DERBY</text>
<text x="646.8" y="443.5" font-size="16.3" textLength="85.4" lengthAdjust="spacingAndGlyphs" fill="#45494f" stroke="#f4f7fb" stroke-width="2.2" paint-order="stroke" stroke-linejoin="round">SOLEDADE</text>
<text x="333.8" y="468.3" font-size="16.3" textLength="54.7" lengthAdjust="spacingAndGlyphs" fill="#45494f" stroke="#f4f7fb" stroke-width="2.2" paint-order="stroke" stroke-linejoin="round">PRADO</text>
<text x="556.3" y="507.6" font-size="16.3" textLength="92.0" lengthAdjust="spacingAndGlyphs" fill="#45494f" stroke="#f4f7fb" stroke-width="2.2" paint-order="stroke" stroke-linejoin="round">PAISSANDU</text>
<text x="813.7" y="515.6" font-size="16.3" textLength="54.4" lengthAdjust="spacingAndGlyphs" fill="#45494f" stroke="#f4f7fb" stroke-width="2.2" paint-order="stroke" stroke-linejoin="round">SANTO</text>
<text x="802.1" y="534.2" font-size="16.3" textLength="76.7" lengthAdjust="spacingAndGlyphs" fill="#45494f" stroke="#f4f7fb" stroke-width="2.2" paint-order="stroke" stroke-linejoin="round">ANTONIO</text>
<text x="299.5" y="374.6" font-size="16.3" textLength="13.7" lengthAdjust="spacingAndGlyphs" fill="#45494f" stroke="#f4f7fb" stroke-width="2.2" paint-order="stroke" stroke-linejoin="round">O</text>
<text transform="translate(443.9,191.2) scale(1.045,1)" font-size="13" text-anchor="end" fill="#bd7099" stroke="#f7fafd" stroke-width="2.2" paint-order="stroke" stroke-linejoin="round">Kinoplex</text>
<g transform="translate(458.2,186.3)">
<path d="M0 17.1 C-2.2 13 -10.3 7 -10.3 0 A10.3 10.3 0 1 1 10.3 0 C10.3 7 2.2 13 0 17.1Z" fill="#ea7db0" stroke="#d2659b" stroke-width=".9"/>
<rect x="-5.5" y="-1.2" width="8" height="6.5" rx="1" fill="#fff"/><path d="M2.5 1.2 L6 -.8 V5 L2.5 3.2Z" fill="#fff"/><circle cx="-3.3" cy="-2.8" r="1.7" fill="#fff"/><circle cx=".5" cy="-2.8" r="1.7" fill="#fff"/>
</g>
<text transform="translate(469.7,231.6) scale(1.045,1)" font-size="13" text-anchor="end" fill="#4a90b6" stroke="#f7fafd" stroke-width="2.2" paint-order="stroke" stroke-linejoin="round">Shell</text>
<g transform="translate(482.5,226.2)">
<path d="M0 17.1 C-2.2 13 -10.3 7 -10.3 0 A10.3 10.3 0 1 1 10.3 0 C10.3 7 2.2 13 0 17.1Z" fill="#55b2ee" stroke="#3f97d3" stroke-width=".9"/>
<rect x="-4.7" y="-4.1" width="6.3" height="10.4" rx=".6" fill="#fff"/><rect x="-5.6" y="5.9" width="8.1" height="1.1" fill="#fff"/><rect x="-3.3" y="-3.2" width="3.3" height="3.4" fill="#55b2ee"/><path d="M2.6 -2.6 Q5.6 -2.2 5.6 1 V4.6 Q5.6 6 4.2 6 Q2.9 6 2.9 4.6 V1.2" stroke="#fff" stroke-width="1.5" fill="none"/>
</g>
<text transform="translate(571.8,238.2) scale(1.045,1)" font-size="13" text-anchor="end" fill="#4a90b6" stroke="#f7fafd" stroke-width="2.2" paint-order="stroke" stroke-linejoin="round">Petrobras</text>
<g transform="translate(585.4,232.0)">
<path d="M0 17.1 C-2.2 13 -10.3 7 -10.3 0 A10.3 10.3 0 1 1 10.3 0 C10.3 7 2.2 13 0 17.1Z" fill="#55b2ee" stroke="#3f97d3" stroke-width=".9"/>
<rect x="-4.7" y="-4.1" width="6.3" height="10.4" rx=".6" fill="#fff"/><rect x="-5.6" y="5.9" width="8.1" height="1.1" fill="#fff"/><rect x="-3.3" y="-3.2" width="3.3" height="3.4" fill="#55b2ee"/><path d="M2.6 -2.6 Q5.6 -2.2 5.6 1 V4.6 Q5.6 6 4.2 6 Q2.9 6 2.9 4.6 V1.2" stroke="#fff" stroke-width="1.5" fill="none"/>
</g>
<text transform="translate(460.4,274.7) scale(1.045,1)" font-size="13" text-anchor="end" fill="#4a90b6" stroke="#f7fafd" stroke-width="2.2" paint-order="stroke" stroke-linejoin="round">Shell</text>
<g transform="translate(474,269.7)">
<path d="M0 17.1 C-2.2 13 -10.3 7 -10.3 0 A10.3 10.3 0 1 1 10.3 0 C10.3 7 2.2 13 0 17.1Z" fill="#55b2ee" stroke="#3f97d3" stroke-width=".9"/>
<rect x="-4.7" y="-4.1" width="6.3" height="10.4" rx=".6" fill="#fff"/><rect x="-5.6" y="5.9" width="8.1" height="1.1" fill="#fff"/><rect x="-3.3" y="-3.2" width="3.3" height="3.4" fill="#55b2ee"/><path d="M2.6 -2.6 Q5.6 -2.2 5.6 1 V4.6 Q5.6 6 4.2 6 Q2.9 6 2.9 4.6 V1.2" stroke="#fff" stroke-width="1.5" fill="none"/>
</g>
<text transform="translate(363.3,273.1) scale(1.045,1)" font-size="13" text-anchor="middle" fill="#4a90b6" stroke="#f7fafd" stroke-width="2.2" paint-order="stroke" stroke-linejoin="round">Bandeira</text>
<text transform="translate(363.3,289.4) scale(1.045,1)" font-size="13" text-anchor="middle" fill="#4a90b6" stroke="#f7fafd" stroke-width="2.2" paint-order="stroke" stroke-linejoin="round">Branca</text>
<g transform="translate(363.3,305.8)">
<path d="M0 17.1 C-2.2 13 -10.3 7 -10.3 0 A10.3 10.3 0 1 1 10.3 0 C10.3 7 2.2 13 0 17.1Z" fill="#55b2ee" stroke="#3f97d3" stroke-width=".9"/>
<rect x="-4.7" y="-4.1" width="6.3" height="10.4" rx=".6" fill="#fff"/><rect x="-5.6" y="5.9" width="8.1" height="1.1" fill="#fff"/><rect x="-3.3" y="-3.2" width="3.3" height="3.4" fill="#55b2ee"/><path d="M2.6 -2.6 Q5.6 -2.2 5.6 1 V4.6 Q5.6 6 4.2 6 Q2.9 6 2.9 4.6 V1.2" stroke="#fff" stroke-width="1.5" fill="none"/>
</g>
<text transform="translate(553.2,308.1) scale(1.045,1)" font-size="13" text-anchor="middle" fill="#4f9a73" stroke="#f7fafd" stroke-width="2.2" paint-order="stroke" stroke-linejoin="round">Parque das</text>
<text transform="translate(553.2,324.0) scale(1.045,1)" font-size="13" text-anchor="middle" fill="#4f9a73" stroke="#f7fafd" stroke-width="2.2" paint-order="stroke" stroke-linejoin="round">Graças</text>
<text transform="translate(791.3,176.0) scale(1.045,1)" font-size="13" text-anchor="middle" fill="#b94f68" stroke="#f7fafd" stroke-width="2.2" paint-order="stroke" stroke-linejoin="round">Unicordis-</text>
<text transform="translate(791.3,192.1) scale(1.045,1)" font-size="13" text-anchor="middle" fill="#b94f68" stroke="#f7fafd" stroke-width="2.2" paint-order="stroke" stroke-linejoin="round">Hospital do</text>
<text transform="translate(791.3,208.2) scale(1.045,1)" font-size="13" text-anchor="middle" fill="#b94f68" stroke="#f7fafd" stroke-width="2.2" paint-order="stroke" stroke-linejoin="round">Coração</text>
<g transform="translate(790.9,228.9)">
<path d="M0 17.1 C-2.2 13 -10.3 7 -10.3 0 A10.3 10.3 0 1 1 10.3 0 C10.3 7 2.2 13 0 17.1Z" fill="#ef4b65" stroke="#c73a55" stroke-width=".9"/>
<path d="M-5.9 -1.3 Q0 -5.9 5.9 -1.3" stroke="#fff" stroke-width="1.4" fill="none" stroke-linecap="round"/><path d="M0 -.4 V7.8 M-4.1 3.7 H4.1" stroke="#fff" stroke-width="2.7"/>
</g>
<text transform="translate(909.6,155.1) scale(1.045,1)" font-size="13" text-anchor="middle" fill="#b0508a" stroke="#f7fafd" stroke-width="2.2" paint-order="stroke" stroke-linejoin="round">Shopping</text>
<text transform="translate(909.6,171.0) scale(1.045,1)" font-size="13" text-anchor="middle" fill="#b0508a" stroke="#f7fafd" stroke-width="2.2" paint-order="stroke" stroke-linejoin="round">Tacaruna</text>
<g transform="translate(909.6,188.1)">
<path d="M0 17.1 C-2.2 13 -10.3 7 -10.3 0 A10.3 10.3 0 1 1 10.3 0 C10.3 7 2.2 13 0 17.1Z" fill="#de5aa0" stroke="#b9407f" stroke-width=".9"/>
<rect x="-5" y="-1.3" width="10" height="7.7" rx=".8" fill="#fff"/><path d="M-2.2 -1.3 V-2 A2.2 2.2 0 0 1 2.2 -2 V-1.3" stroke="#fff" stroke-width="1.2" fill="none"/>
</g>
<text transform="translate(1033,137.4) scale(1.045,1)" font-size="13" text-anchor="middle" fill="#8a8e4d" stroke="#f7fafd" stroke-width="2.2" paint-order="stroke" stroke-linejoin="round">Praia dos</text>
<text transform="translate(1033,152.0) scale(1.045,1)" font-size="13" text-anchor="middle" fill="#8a8e4d" stroke="#f7fafd" stroke-width="2.2" paint-order="stroke" stroke-linejoin="round">Milagres</text>
<text transform="translate(868,243.3) scale(1.045,1)" font-size="13" text-anchor="middle" fill="#b94f68" stroke="#f7fafd" stroke-width="2.2" paint-order="stroke" stroke-linejoin="round">Hospital</text>
<text transform="translate(868,259.2) scale(1.045,1)" font-size="13" text-anchor="middle" fill="#b94f68" stroke="#f7fafd" stroke-width="2.2" paint-order="stroke" stroke-linejoin="round">Naval de</text>
<text transform="translate(868,275.1) scale(1.045,1)" font-size="13" text-anchor="middle" fill="#b94f68" stroke="#f7fafd" stroke-width="2.2" paint-order="stroke" stroke-linejoin="round">Recife</text>
<g transform="translate(867.6,292.5)">
<path d="M0 17.1 C-2.2 13 -10.3 7 -10.3 0 A10.3 10.3 0 1 1 10.3 0 C10.3 7 2.2 13 0 17.1Z" fill="#ef4b65" stroke="#c73a55" stroke-width=".9"/>
<path d="M-5.9 -1.3 Q0 -5.9 5.9 -1.3" stroke="#fff" stroke-width="1.4" fill="none" stroke-linecap="round"/><path d="M0 -.4 V7.8 M-4.1 3.7 H4.1" stroke="#fff" stroke-width="2.7"/>
</g>
<text transform="translate(935,292.5) scale(1.045,1)" font-size="13" text-anchor="middle" fill="#a164b5" stroke="#f7fafd" stroke-width="2.2" paint-order="stroke" stroke-linejoin="round">Cruz do</text>
<text transform="translate(935,308.4) scale(1.045,1)" font-size="13" text-anchor="middle" fill="#a164b5" stroke="#f7fafd" stroke-width="2.2" paint-order="stroke" stroke-linejoin="round">Patrão</text>
<g transform="translate(934.8,323.3)">
<path d="M0 17.1 C-2.2 13 -10.3 7 -10.3 0 A10.3 10.3 0 1 1 10.3 0 C10.3 7 2.2 13 0 17.1Z" fill="#c573dc" stroke="#a455bf" stroke-width=".9"/>
<rect x="-5.8" y="-3.2" width="11.8" height="8.4" rx="1" fill="#fff"/><rect x="-5" y="-4" width="4.4" height="1.6" rx=".5" fill="#fff"/><circle cx="2" cy="1.9" r="2" fill="none" stroke="#c573dc" stroke-width="1.1"/><path d="M-4.5 -.3 H-1.6" stroke="#c573dc" stroke-width="1"/>
</g>
<text transform="translate(711.7,312.7) scale(1.045,1)" font-size="13" text-anchor="end" fill="#b94f68" stroke="#f7fafd" stroke-width="2.2" paint-order="stroke" stroke-linejoin="round">Hospital</text>
<text transform="translate(711.7,328.0) scale(1.045,1)" font-size="13" text-anchor="end" fill="#b94f68" stroke="#f7fafd" stroke-width="2.2" paint-order="stroke" stroke-linejoin="round">Oswaldo Cruz</text>
<g transform="translate(725.2,314.5)">
<path d="M0 17.1 C-2.2 13 -10.3 7 -10.3 0 A10.3 10.3 0 1 1 10.3 0 C10.3 7 2.2 13 0 17.1Z" fill="#ef4b65" stroke="#c73a55" stroke-width=".9"/>
<path d="M-5.9 -1.3 Q0 -5.9 5.9 -1.3" stroke="#fff" stroke-width="1.4" fill="none" stroke-linecap="round"/><path d="M0 -.4 V7.8 M-4.1 3.7 H4.1" stroke="#fff" stroke-width="2.7"/>
</g>
<g transform="translate(355.5,355.4)">
<path d="M0 17.1 C-2.2 13 -10.3 7 -10.3 0 A10.3 10.3 0 1 1 10.3 0 C10.3 7 2.2 13 0 17.1Z" fill="#55b2ee" stroke="#3f97d3" stroke-width=".9"/>
<rect x="-4.7" y="-4.1" width="6.3" height="10.4" rx=".6" fill="#fff"/><rect x="-5.6" y="5.9" width="8.1" height="1.1" fill="#fff"/><rect x="-3.3" y="-3.2" width="3.3" height="3.4" fill="#55b2ee"/><path d="M2.6 -2.6 Q5.6 -2.2 5.6 1 V4.6 Q5.6 6 4.2 6 Q2.9 6 2.9 4.6 V1.2" stroke="#fff" stroke-width="1.5" fill="none"/>
</g>
<text transform="translate(369.1,362.0) scale(1.045,1)" font-size="13" text-anchor="start" fill="#4a90b6" stroke="#f7fafd" stroke-width="2.2" paint-order="stroke" stroke-linejoin="round">Petrobras</text>
<text transform="translate(493,362.7) scale(1.045,1)" font-size="13" text-anchor="end" fill="#b94f68" stroke="#f7fafd" stroke-width="2.2" paint-order="stroke" stroke-linejoin="round">Hospital</text>
<text transform="translate(493,378.6) scale(1.045,1)" font-size="13" text-anchor="end" fill="#b94f68" stroke="#f7fafd" stroke-width="2.2" paint-order="stroke" stroke-linejoin="round">de Ávila</text>
<g transform="translate(505.5,365.1)">
<path d="M0 17.1 C-2.2 13 -10.3 7 -10.3 0 A10.3 10.3 0 1 1 10.3 0 C10.3 7 2.2 13 0 17.1Z" fill="#ef4b65" stroke="#c73a55" stroke-width=".9"/>
<path d="M-5.9 -1.3 Q0 -5.9 5.9 -1.3" stroke="#fff" stroke-width="1.4" fill="none" stroke-linecap="round"/><path d="M0 -.4 V7.8 M-4.1 3.7 H4.1" stroke="#fff" stroke-width="2.7"/>
</g>
<g transform="translate(547,374.8)">
<path d="M0 17.1 C-2.2 13 -10.3 7 -10.3 0 A10.3 10.3 0 1 1 10.3 0 C10.3 7 2.2 13 0 17.1Z" fill="#de5aa0" stroke="#b9407f" stroke-width=".9"/>
<rect x="-5" y="-1.3" width="10" height="7.7" rx=".8" fill="#fff"/><path d="M-2.2 -1.3 V-2 A2.2 2.2 0 0 1 2.2 -2 V-1.3" stroke="#fff" stroke-width="1.2" fill="none"/>
</g>
<text transform="translate(560.2,371.3) scale(1.045,1)" font-size="13" text-anchor="start" fill="#b0508a" stroke="#f7fafd" stroke-width="2.2" paint-order="stroke" stroke-linejoin="round">Galeria</text>
<text transform="translate(560.2,387.2) scale(1.045,1)" font-size="13" text-anchor="start" fill="#b0508a" stroke="#f7fafd" stroke-width="2.2" paint-order="stroke" stroke-linejoin="round">Capunga</text>
<g transform="translate(662,364.3)">
<path d="M0 17.1 C-2.2 13 -10.3 7 -10.3 0 A10.3 10.3 0 1 1 10.3 0 C10.3 7 2.2 13 0 17.1Z" fill="#ef4b65" stroke="#c73a55" stroke-width=".9"/>
<path d="M-5.9 -1.3 Q0 -5.9 5.9 -1.3" stroke="#fff" stroke-width="1.4" fill="none" stroke-linecap="round"/><path d="M0 -.4 V7.8 M-4.1 3.7 H4.1" stroke="#fff" stroke-width="2.7"/>
</g>
<text transform="translate(675.1,362.0) scale(1.045,1)" font-size="13" text-anchor="start" fill="#b94f68" stroke="#f7fafd" stroke-width="2.2" paint-order="stroke" stroke-linejoin="round">Hospital de</text>
<text transform="translate(675.1,377.9) scale(1.045,1)" font-size="13" text-anchor="start" fill="#b94f68" stroke="#f7fafd" stroke-width="2.2" paint-order="stroke" stroke-linejoin="round">Fraturas</text>
<text transform="translate(929,377.4) scale(1.045,1)" font-size="13" text-anchor="middle" fill="#b0508a" stroke="#f7fafd" stroke-width="2.2" paint-order="stroke" stroke-linejoin="round">Recife</text>
<text transform="translate(929,393.3) scale(1.045,1)" font-size="13" text-anchor="middle" fill="#b0508a" stroke="#f7fafd" stroke-width="2.2" paint-order="stroke" stroke-linejoin="round">Outlet</text>
<g transform="translate(929,407.1)">
<path d="M0 17.1 C-2.2 13 -10.3 7 -10.3 0 A10.3 10.3 0 1 1 10.3 0 C10.3 7 2.2 13 0 17.1Z" fill="#de5aa0" stroke="#b9407f" stroke-width=".9"/>
<rect x="-5" y="-1.3" width="10" height="7.7" rx=".8" fill="#fff"/><path d="M-2.2 -1.3 V-2 A2.2 2.2 0 0 1 2.2 -2 V-1.3" stroke="#fff" stroke-width="1.2" fill="none"/>
</g>
<text transform="translate(840.2,438.8) scale(1.045,1)" font-size="13" text-anchor="middle" fill="#a164b5" stroke="#f7fafd" stroke-width="2.2" paint-order="stroke" stroke-linejoin="round">Palácio da</text>
<text transform="translate(840.2,454.9) scale(1.045,1)" font-size="13" text-anchor="middle" fill="#a164b5" stroke="#f7fafd" stroke-width="2.2" paint-order="stroke" stroke-linejoin="round">Justiça</text>
<g transform="translate(839,473.2)">
<path d="M0 17.1 C-2.2 13 -10.3 7 -10.3 0 A10.3 10.3 0 1 1 10.3 0 C10.3 7 2.2 13 0 17.1Z" fill="#c573dc" stroke="#a455bf" stroke-width=".9"/>
<rect x="-5.8" y="-3.2" width="11.8" height="8.4" rx="1" fill="#fff"/><rect x="-5" y="-4" width="4.4" height="1.6" rx=".5" fill="#fff"/><circle cx="2" cy="1.9" r="2" fill="none" stroke="#c573dc" stroke-width="1.1"/><path d="M-4.5 -.3 H-1.6" stroke="#c573dc" stroke-width="1"/>
</g>
<g transform="translate(470.9,455.2)">
<path d="M0 17.1 C-2.2 13 -10.3 7 -10.3 0 A10.3 10.3 0 1 1 10.3 0 C10.3 7 2.2 13 0 17.1Z" fill="#55b2ee" stroke="#3f97d3" stroke-width=".9"/>
<rect x="-4.7" y="-4.1" width="6.3" height="10.4" rx=".6" fill="#fff"/><rect x="-5.6" y="5.9" width="8.1" height="1.1" fill="#fff"/><rect x="-3.3" y="-3.2" width="3.3" height="3.4" fill="#55b2ee"/><path d="M2.6 -2.6 Q5.6 -2.2 5.6 1 V4.6 Q5.6 6 4.2 6 Q2.9 6 2.9 4.6 V1.2" stroke="#fff" stroke-width="1.5" fill="none"/>
</g>
<text transform="translate(484.5,452.8) scale(1.045,1)" font-size="13" text-anchor="start" fill="#4a90b6" stroke="#f7fafd" stroke-width="2.2" paint-order="stroke" stroke-linejoin="round">Bandeira</text>
<text transform="translate(484.5,468.7) scale(1.045,1)" font-size="13" text-anchor="start" fill="#4a90b6" stroke="#f7fafd" stroke-width="2.2" paint-order="stroke" stroke-linejoin="round">Branca</text>
<text transform="translate(766,472.2) scale(1.045,1)" font-size="13" text-anchor="end" fill="#b0508a" stroke="#f7fafd" stroke-width="2.2" paint-order="stroke" stroke-linejoin="round">Galeria</text>
<text transform="translate(766,488.1) scale(1.045,1)" font-size="13" text-anchor="end" fill="#b0508a" stroke="#f7fafd" stroke-width="2.2" paint-order="stroke" stroke-linejoin="round">Ouro</text>
<g transform="translate(778.6,473.5)">
<path d="M0 17.1 C-2.2 13 -10.3 7 -10.3 0 A10.3 10.3 0 1 1 10.3 0 C10.3 7 2.2 13 0 17.1Z" fill="#de5aa0" stroke="#b9407f" stroke-width=".9"/>
<rect x="-5" y="-1.3" width="10" height="7.7" rx=".8" fill="#fff"/><path d="M-2.2 -1.3 V-2 A2.2 2.2 0 0 1 2.2 -2 V-1.3" stroke="#fff" stroke-width="1.2" fill="none"/>
</g>
<g transform="translate(924,466.2)">
<path d="M0 17.1 C-2.2 13 -10.3 7 -10.3 0 A10.3 10.3 0 1 1 10.3 0 C10.3 7 2.2 13 0 17.1Z" fill="#c573dc" stroke="#a455bf" stroke-width=".9"/>
<rect x="-5.8" y="-3.2" width="11.8" height="8.4" rx="1" fill="#fff"/><rect x="-5" y="-4" width="4.4" height="1.6" rx=".5" fill="#fff"/><circle cx="2" cy="1.9" r="2" fill="none" stroke="#c573dc" stroke-width="1.1"/><path d="M-4.5 -.3 H-1.6" stroke="#c573dc" stroke-width="1"/>
</g>
<text transform="translate(937.9,465.3) scale(1.045,1)" font-size="13" text-anchor="start" fill="#a164b5" stroke="#f7fafd" stroke-width="2.2" paint-order="stroke" stroke-linejoin="round">Torre</text>
<text transform="translate(937.9,480.7) scale(1.045,1)" font-size="13" text-anchor="start" fill="#a164b5" stroke="#f7fafd" stroke-width="2.2" paint-order="stroke" stroke-linejoin="round">Malakoff</text>
<g transform="translate(422.3,513.8)">
<path d="M0 17.1 C-2.2 13 -10.3 7 -10.3 0 A10.3 10.3 0 1 1 10.3 0 C10.3 7 2.2 13 0 17.1Z" fill="#ef4b65" stroke="#c73a55" stroke-width=".9"/>
<path d="M-5.9 -1.3 Q0 -5.9 5.9 -1.3" stroke="#fff" stroke-width="1.4" fill="none" stroke-linecap="round"/><path d="M0 -.4 V7.8 M-4.1 3.7 H4.1" stroke="#fff" stroke-width="2.7"/>
</g>
<text transform="translate(435.9,511.8) scale(1.045,1)" font-size="13" text-anchor="start" fill="#b94f68" stroke="#f7fafd" stroke-width="2.2" paint-order="stroke" stroke-linejoin="round">Maternidade</text>
<text transform="translate(435.9,527.7) scale(1.045,1)" font-size="13" text-anchor="start" fill="#b94f68" stroke="#f7fafd" stroke-width="2.2" paint-order="stroke" stroke-linejoin="round">Santa Lucia</text>
<text transform="translate(620.8,535.5) scale(1.045,1)" font-size="13" text-anchor="end" fill="#b94f68" stroke="#f7fafd" stroke-width="2.2" paint-order="stroke" stroke-linejoin="round">Hospital</text>
<g transform="translate(634,537.0)">
<path d="M0 17.1 C-2.2 13 -10.3 7 -10.3 0 A10.3 10.3 0 1 1 10.3 0 C10.3 7 2.2 13 0 17.1Z" fill="#ef4b65" stroke="#c73a55" stroke-width=".9"/>
<path d="M-5.9 -1.3 Q0 -5.9 5.9 -1.3" stroke="#fff" stroke-width="1.4" fill="none" stroke-linecap="round"/><path d="M0 -.4 V7.8 M-4.1 3.7 H4.1" stroke="#fff" stroke-width="2.7"/>
</g>
<text transform="translate(763.3,524.7) scale(1.045,1)" font-size="13" text-anchor="end" fill="#a164b5" stroke="#f7fafd" stroke-width="2.2" paint-order="stroke" stroke-linejoin="round">Casa de</text>
<text transform="translate(763.3,540.6) scale(1.045,1)" font-size="13" text-anchor="end" fill="#a164b5" stroke="#f7fafd" stroke-width="2.2" paint-order="stroke" stroke-linejoin="round">Cultura de</text>
<g transform="translate(775.7,534.0)">
<path d="M0 17.1 C-2.2 13 -10.3 7 -10.3 0 A10.3 10.3 0 1 1 10.3 0 C10.3 7 2.2 13 0 17.1Z" fill="#c573dc" stroke="#a455bf" stroke-width=".9"/>
<rect x="-5.8" y="-3.2" width="11.8" height="8.4" rx="1" fill="#fff"/><rect x="-5" y="-4" width="4.4" height="1.6" rx=".5" fill="#fff"/><circle cx="2" cy="1.9" r="2" fill="none" stroke="#c573dc" stroke-width="1.1"/><path d="M-4.5 -.3 H-1.6" stroke="#c573dc" stroke-width="1"/>
</g>
<g transform="translate(903,518.7)">
<path d="M0 17.1 C-2.2 13 -10.3 7 -10.3 0 A10.3 10.3 0 1 1 10.3 0 C10.3 7 2.2 13 0 17.1Z" fill="#55b2ee" stroke="#3f97d3" stroke-width=".9"/>
<rect x="-4.7" y="-4.1" width="6.3" height="10.4" rx=".6" fill="#fff"/><rect x="-5.6" y="5.9" width="8.1" height="1.1" fill="#fff"/><rect x="-3.3" y="-3.2" width="3.3" height="3.4" fill="#55b2ee"/><path d="M2.6 -2.6 Q5.6 -2.2 5.6 1 V4.6 Q5.6 6 4.2 6 Q2.9 6 2.9 4.6 V1.2" stroke="#fff" stroke-width="1.5" fill="none"/>
</g>
<text transform="translate(917,525.8) scale(1.045,1)" font-size="13" text-anchor="start" fill="#4a90b6" stroke="#f7fafd" stroke-width="2.2" paint-order="stroke" stroke-linejoin="round">Petrobras</text>
<g transform="translate(305.5,402.0)">
<path d="M0 17.1 C-2.2 13 -10.3 7 -10.3 0 A10.3 10.3 0 1 1 10.3 0 C10.3 7 2.2 13 0 17.1Z" fill="#55b2ee" stroke="#3f97d3" stroke-width=".9"/>
<rect x="-4.7" y="-4.1" width="6.3" height="10.4" rx=".6" fill="#fff"/><rect x="-5.6" y="5.9" width="8.1" height="1.1" fill="#fff"/><rect x="-3.3" y="-3.2" width="3.3" height="3.4" fill="#55b2ee"/><path d="M2.6 -2.6 Q5.6 -2.2 5.6 1 V4.6 Q5.6 6 4.2 6 Q2.9 6 2.9 4.6 V1.2" stroke="#fff" stroke-width="1.5" fill="none"/>
</g>
<path d="M959 120.5 H986 L991 128 L982 141 H963 L954 128Z" fill="#fff" stroke="#6f7479" stroke-width="1.2"/>
<text x="972.5" y="134.5" font-size="11" text-anchor="middle" fill="#5a5f66" letter-spacing=".4">015</text>
</svg>
<div class="abs" style="left:10px;top:10px;width:34px;height:64px;border:2px solid rgba(0,0,0,.2);border-radius:4px;background-clip:padding-box">
  <div class="abs" style="left:0;top:0;width:30px;height:30px;background:#fff;border-bottom:1px solid #ccc;border-radius:2px 2px 0 0"></div>
  <div class="abs" style="left:0;top:30px;width:30px;height:30px;background:#fff;border-radius:0 0 2px 2px"></div>
  <svg class="abs" style="left:0;top:0" width="30" height="60" viewBox="0 0 30 60"><path d="M8.3 15 H21.3 M14.8 8.8 V21.2" stroke="#fbc10f" stroke-width="2.3"/><path d="M8.6 44.6 H21.2" stroke="#fbc10f" stroke-width="2.4"/></svg>
</div>
<svg class="abs" style="left:527px;top:219px" width="32" height="44" viewBox="0 0 32 44"><path d="M1.5 1.5 H31 V30.5 H15.5 L1.5 43 Z" fill="#2489e4"/><text x="16.2" y="20.6" font-size="13.5" font-weight="bold" fill="#fff" text-anchor="middle" font-family="'Liberation Sans',sans-serif">1</text></svg>
<div class="abs" style="right:0;bottom:0;height:16px;padding:0 5px 0 6px;background:rgba(255,255,255,.8);font-size:11px;line-height:16px;font-weight:bold;color:#f3c242;letter-spacing:-.3px">Leaflet</div>
</div>
  <div id="bluebar" class="abs"><span>[ -8.05193, -34.87869 ] Coordenadas obtidas através do arquivo XML.</span></div>

  <!-- footer -->
  <svg class="abs" style="left:306px;top:522px" width="7" height="11" viewBox="0 0 7 11"><path d="M5.5 1 L1.5 5.5 L5.5 10" stroke="#bdbdbd" stroke-width="1.8" fill="none"/></svg>
  <div class="fbtn abs" style="left:318px;top:520px;color:#bdbdbd;font-weight:normal">ANTERIOR</div>
  <div class="fbtn abs" style="left:409px;top:520px;color:#f2b705">PRÓXIMO</div>
  <svg class="abs" style="left:483px;top:522px" width="8" height="11" viewBox="0 0 8 11"><path d="M1.5 1 L6 5.5 L1.5 10" stroke="#f2b705" stroke-width="2.2" fill="none"/></svg>
  <div class="fbtn abs" style="left:971px;top:520px;color:#616161;font-weight:normal">FECHAR</div>
  <div class="fbtn abs" style="left:1043px;top:513px;width:154px;height:28px;border:1px solid #e9b429;border-radius:4px;color:#e9ad1f"><span style="position:absolute;left:14px;top:6px">SALVAR E PRÓXIMO</span></div>
  <div class="fbtn abs" style="left:1205px;top:513px;width:102px;height:28px;background:#fdbf12;border-radius:4px;color:#3c3005;box-shadow:0 2px 3px rgba(0,0,0,.35);font-weight:normal"><span style="position:absolute;left:14px;top:7px">SALVAR</span>
    <svg class="abs" style="left:71px;top:7px" width="18" height="14" viewBox="0 0 18 14"><path d="M2 7.5 L6.5 12 L16 2" stroke="#4a3b08" stroke-width="2.6" fill="none"/></svg></div>
</div>

<svg class="abs" style="left:0;top:0;pointer-events:none" width="1365" height="717" viewBox="0 0 1365 717">
  <circle cx="848" cy="359.3" r="48.3" fill="none" stroke="#ea0a14" stroke-width="3"/>
  <path d="M799.5 348 L612 340.9" stroke="#ea0a14" stroke-width="2.9" fill="none"/>
  <path d="M607 340.7 L615.6 335.3 L613.2 340.9 L615.2 346.8 Z" fill="#ea0a14"/>
  <text x="886.8" y="332.3" font-family="'Liberation Serif',serif" font-size="35" fill="#ea0a14" stroke="#ea0a14" stroke-width=".9">1</text>
  <rect x="1227" y="588.5" width="108" height="42.5" rx="2" fill="none" stroke="#ea0a14" stroke-width="3"/>
  <text x="1316.3" y="587.3" font-family="'Liberation Serif',serif" font-size="40" fill="#ea0a14" stroke="#ea0a14" stroke-width=".7">2</text>
</svg>

</body>
</html>
